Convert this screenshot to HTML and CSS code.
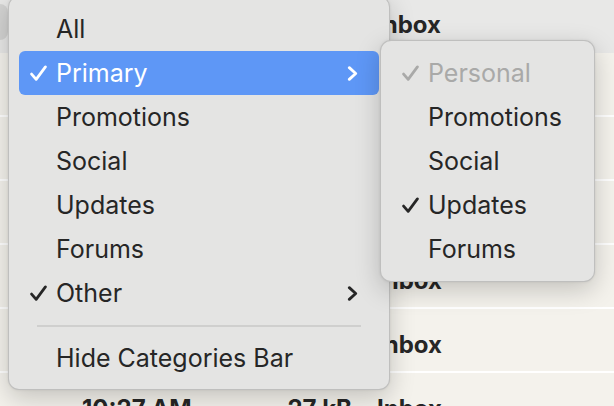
FILE: index.html
```html
<!DOCTYPE html>
<html lang="en">
<head>
  <meta charset="UTF-8" />
  <title>Mail Categories Menu</title>
  <link rel="stylesheet" href="styles.css">
</head>
<body>
  <div class="mail-list">
    <div class="list-head">
      <div class="head-tab"></div>
      <span class="head-box">Inbox</span>
    </div>
    <div class="mail-row"><span class="col-time">10:41 AM</span><span class="col-size">31 kB</span><span class="col-box">Inbox</span></div>
    <div class="mail-row"><span class="col-time">10:39 AM</span><span class="col-size">29 kB</span><span class="col-box">Inbox</span></div>
    <div class="mail-row"><span class="col-time">10:35 AM</span><span class="col-size">44 kB</span><span class="col-box">Inbox</span></div>
    <div class="mail-row"><span class="col-time">10:31 AM</span><span class="col-size">30 kB</span><span class="col-box">Inbox</span></div>
    <div class="mail-row"><span class="col-time">10:29 AM</span><span class="col-size">28 kB</span><span class="col-box">Inbox</span></div>
    <div class="mail-row"><span class="col-time">10:27 AM</span><span class="col-size">27 kB</span><span class="col-box">Inbox</span></div>
  </div>

  <!-- Categories menu -->
  <div class="menu main-menu">
    <div class="menu-item"><span class="check"></span><span>All</span></div>
    <div class="menu-item active">
      <span class="check"><svg viewBox="0 0 16 16"><path d="M1.5 8.5 L5.8 13.5 L14.5 1.8"/></svg></span>
      <span>Primary</span>
      <span class="chevron"><svg viewBox="0 0 10 14"><path d="M2 1.5 L8 7 L2 12.5"/></svg></span>
    </div>
    <div class="menu-item"><span class="check"></span><span>Promotions</span></div>
    <div class="menu-item"><span class="check"></span><span>Social</span></div>
    <div class="menu-item"><span class="check"></span><span>Updates</span></div>
    <div class="menu-item"><span class="check"></span><span>Forums</span></div>
    <div class="menu-item">
      <span class="check"><svg viewBox="0 0 16 16"><path d="M1.5 8.5 L5.8 13.5 L14.5 1.8"/></svg></span>
      <span>Other</span>
      <span class="chevron"><svg viewBox="0 0 10 14"><path d="M2 1.5 L8 7 L2 12.5"/></svg></span>
    </div>
    <div class="menu-sep"></div>
    <div class="menu-item"><span class="check"></span><span>Hide Categories Bar</span></div>
  </div>

  <!-- Primary submenu -->
  <div class="menu sub-menu">
    <div class="menu-item disabled">
      <span class="check"><svg viewBox="0 0 16 16"><path d="M1.5 8.5 L5.8 13.5 L14.5 1.8"/></svg></span>
      <span>Personal</span>
    </div>
    <div class="menu-item"><span class="check"></span><span>Promotions</span></div>
    <div class="menu-item"><span class="check"></span><span>Social</span></div>
    <div class="menu-item">
      <span class="check"><svg viewBox="0 0 16 16"><path d="M1.5 8.5 L5.8 13.5 L14.5 1.8"/></svg></span>
      <span>Updates</span>
    </div>
    <div class="menu-item"><span class="check"></span><span>Forums</span></div>
  </div>
</body>
</html>
```

FILE: styles.css
```css
/* General */
body {
  margin: 0;
  height: 406px;
  background: #f4f2ec;
  font-family: Inter, "Liberation Sans", sans-serif;
  color: #262626;
  overflow: hidden;
}

/* Mail list behind the menus */
.list-head {
  height: 53px;
  display: flex;
  align-items: center;
  background: #e8e8e7;
}

.head-tab {
  align-self: flex-start;
  margin-top: 4px;
  width: 8px;
  height: 36px;
  border-radius: 0 8px 8px 0;
  background: #d3d3d2;
}

.head-box {
  margin-left: 368px;
  margin-top: -4px;
  font-size: 24px;
  font-weight: 700;
}

.mail-row {
  height: 64px;
  padding: 9px 0 0 82px;
  box-sizing: border-box;
  border-bottom: 2px solid #ffffff;
  display: grid;
  grid-template-columns: 140px 130px auto;
  align-items: center;
  font-size: 24px;
  font-weight: 700;
}

.col-size {
  text-align: right;
}

.col-box {
  margin-left: 25px;
}

/* Menus */
.menu {
  position: absolute;
  box-sizing: border-box;
  padding: 10px;
  background: #e4e4e3;
  border: 1px solid rgba(0, 0, 0, 0.16);
  border-radius: 11px;
  box-shadow: 0 8px 26px rgba(0, 0, 0, 0.2), 0 0 3px rgba(0, 0, 0, 0.08);
}

.main-menu {
  left: 8px;
  top: -4px;
  width: 382px;
  padding-bottom: 9px;
}

.sub-menu {
  left: 380px;
  top: 40px;
  width: 215px;
}

.menu-item {
  height: 44px;
  display: grid;
  grid-template-columns: 26px 1fr auto;
  align-items: center;
  padding: 0 21px 0 11px;
  border-radius: 6px;
  font-size: 25px;
  line-height: 1;
  color: #262626;
}

.check svg {
  display: block;
  width: 17px;
  height: 17px;
  fill: none;
  stroke: currentColor;
  stroke-width: 2.6;
  stroke-linecap: round;
  stroke-linejoin: round;
}

.chevron svg {
  display: block;
  width: 11px;
  height: 15px;
  fill: none;
  stroke: currentColor;
  stroke-width: 2.6;
  stroke-linecap: round;
  stroke-linejoin: round;
}

.menu-item.active {
  background: #5e97f6;
  color: #ffffff;
}

.menu-item.disabled {
  color: #a9a9a8;
}

.menu-sep {
  height: 2px;
  margin: 10px 18px 9px;
  background: #cfcfce;
}
```
